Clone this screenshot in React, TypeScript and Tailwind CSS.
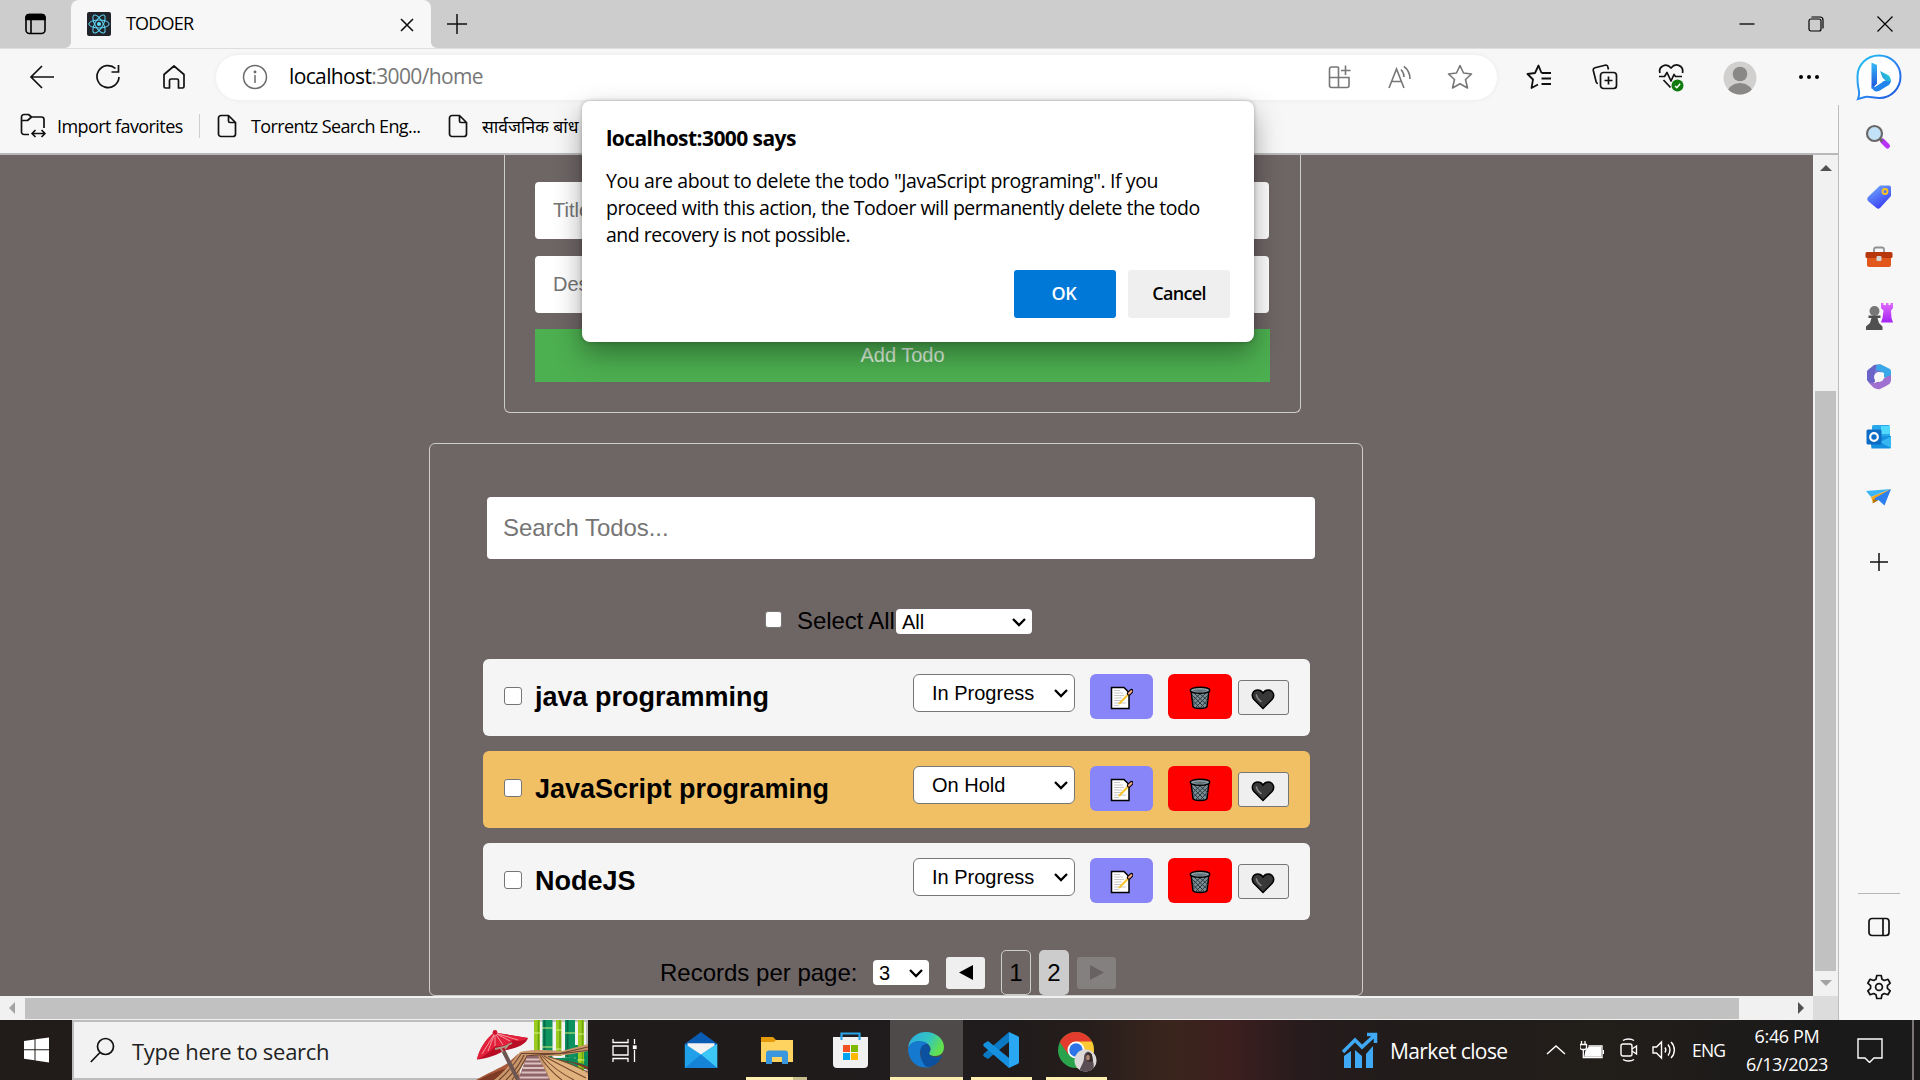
import React from "react";

type P = { className?: string };

function Chevron({ className = "" }: P) {
  return (
    <svg className={className} width="14" height="10" viewBox="0 0 14 10" fill="none" stroke="#000" strokeWidth="2.3">
      <path d="M1 2 L7 8 L13 2" />
    </svg>
  );
}

function ReactLogo() {
  return (
    <svg width="24" height="24" viewBox="0 0 24 24" fill="none" stroke="#61dafb" strokeWidth="1">
      <rect width="24" height="24" rx="2" fill="#20232a" stroke="none" />
      <ellipse cx="12" cy="12" rx="10.2" ry="4" />
      <ellipse cx="12" cy="12" rx="10.2" ry="4" transform="rotate(60 12 12)" />
      <ellipse cx="12" cy="12" rx="10.2" ry="4" transform="rotate(120 12 12)" />
      <circle cx="12" cy="12" r="2.1" fill="#61dafb" stroke="none" />
    </svg>
  );
}

function TabStrip() {
  return (
    <div className="flex h-12 shrink-0 items-center bg-[#cdcdcd]">
      <svg className="ml-[25px]" width="22" height="22" viewBox="1 0 22 22" fill="none" stroke="#000" strokeWidth="1.6">
        <rect x="2" y="1.5" width="19" height="19" rx="3.5" />
        <path d="M2 6.5V4.5a3 3 0 0 1 3-3h13a3 3 0 0 1 3 3v2z" fill="#000" />
        <path d="M7 7V20.5" />
      </svg>
      <div className="relative ml-6 flex h-12 w-[360px] items-center rounded-t-lg bg-[#f7f7f7] pl-4">
        <svg className="absolute -left-1.5 bottom-0" width="6" height="6" viewBox="0 0 6 6"><path d="M6 0V6H0A6 6 0 0 0 6 0Z" fill="#f7f7f7" /></svg>
        <svg className="absolute -right-1.5 bottom-0" width="6" height="6" viewBox="0 0 6 6"><path d="M0 0V6H6A6 6 0 0 1 0 0Z" fill="#f7f7f7" /></svg>
        <ReactLogo />
        <span className="mb-0.5 ml-[15px] text-lg tracking-[-0.8px]">TODOER</span>
        <svg className="absolute left-[329px] top-[18px]" width="14" height="14" viewBox="0 0 14 14" stroke="#111" strokeWidth="1.6"><path d="M1 1L13 13M13 1L1 13" /></svg>
      </div>
      <svg className="ml-[15px]" width="22" height="22" viewBox="0 0 22 22" stroke="#111" strokeWidth="1.5"><path d="M11 1V21M1 11H21" /></svg>
      <div className="ml-auto flex items-center pr-[27px]">
        <svg width="16" height="16" viewBox="0 0 16 16" stroke="#000" strokeWidth="1.3"><path d="M.5 8H15.5" /></svg>
        <svg className="ml-[53px]" width="16" height="16" viewBox="0 0 16 16" fill="none" stroke="#000" strokeWidth="1.2">
          <rect x="1" y="3" width="12" height="12" rx="2" />
          <path d="M3.5 1H12a3 3 0 0 1 3 3V12.5" />
        </svg>
        <svg className="ml-[53px]" width="16" height="16" viewBox="0 0 16 16" stroke="#000" strokeWidth="1.2"><path d="M.5 .5L15.5 15.5M15.5 .5L.5 15.5" /></svg>
      </div>
    </div>
  );
}

function BingLogo() {
  return (
    <svg width="48" height="48" viewBox="0 0 48 48" fill="none">
      <defs>
        <linearGradient id="bg1" x1="0" y1="0" x2="1" y2="1"><stop stopColor="#1fc8ee" /><stop offset=".6" stopColor="#2d7df2" /><stop offset="1" stopColor="#1652d8" /></linearGradient>
        <linearGradient id="bg2" x1="0" y1="0" x2="0" y2="1"><stop stopColor="#37bdf5" /><stop offset="1" stopColor="#1f4ddd" /></linearGradient>
        <linearGradient id="bg3" x1="1" y1="0" x2="0" y2="1"><stop stopColor="#2ee0d0" /><stop offset="1" stopColor="#1f7bea" /></linearGradient>
      </defs>
      <path d="M24 2.500C36 2.500 45.500 11.500 45.500 23.500S36 45 24.500 45C18 45 14 43 10 44L3 46C4.500 42.500 4.500 39.500 3.500 35.500C2.500 31.500 2.500 28.500 2.500 23.500C2.500 11.500 12 2.500 24 2.500Z" fill="#fff" stroke="url(#bg1)" strokeWidth="2" />
      <path d="M16.500 9.500L22 12V30.500L17 36C16.500 35.500 16.500 35 16.500 34Z" fill="url(#bg2)" />
      <path d="M25 18L33 22C37 24.500 36.500 30.500 33 32.500L27.500 28.500L30.500 27.500L27.500 24.500Z" fill="url(#bg3)" />
      <path d="M16.500 33C17 37.500 21 39.500 24 38L33 32.500C35 31 36 29 35.500 27C34 29.500 31 27.500 28.500 28.500L20 34Z" fill="#2384ee" />
    </svg>
  );
}

function Toolbar() {
  return (
    <div className="flex h-[57px] shrink-0 items-center border-t border-[#dedede] bg-[#f7f7f7]">
      <svg className="ml-[29px]" width="25" height="26" viewBox="0 0 25 26" fill="none" stroke="#111" strokeWidth="1.7"><path d="M25 13H2M13 2L2 13L13 24" /></svg>
      <svg className="ml-[41px]" width="26" height="26" viewBox="0 0 26 26" fill="none" stroke="#111" strokeWidth="1.7"><path d="M20.500 4.500A11 11 0 1 0 24 13M23.500 1V8H16.500" /></svg>
      <svg className="ml-[41px]" width="24" height="26" viewBox="0 0 24 26" fill="none" stroke="#111" strokeWidth="1.7" strokeLinejoin="round"><path d="M2 10.500L12 2L22 10.500V22.500C22 23.500 21.500 24 20.500 24H16.500V16.500C16.500 15.500 16 15 15 15H9C8 15 7.500 15.500 7.500 16.500V24H3.500C2.500 24 2 23.500 2 22.500Z" /></svg>
      <div className="ml-[30px] flex h-[45px] w-[1281px] items-center rounded-full bg-white shadow-[0_0_5px_rgba(0,0,0,0.06)]">
        <svg className="ml-[26px]" width="26" height="26" viewBox="0 0 26 26" fill="none" stroke="#6b6b6b" strokeWidth="1.500"><circle cx="13" cy="13" r="11.500" /><path d="M13 11V19" /><circle cx="13" cy="8" r=".7" fill="#6b6b6b" /></svg>
        <span className="ml-[21px] text-[21px] tracking-[-0.63px] text-[#767676]"><span className="text-black">localhost</span>:3000/home</span>
        <svg className="ml-auto" width="23" height="24" viewBox="0 0 23 24" fill="none" stroke="#767676" strokeWidth="1.600"><path d="M10.500 2H3.500A2 2 0 0 0 1.500 4V20.500A2 2 0 0 0 3.500 22.500H19A2 2 0 0 0 21 20.500V12.500H1.500M10.500 2V22.500M17.500 .5V10M13 5.500H22.500" /></svg>
        <svg className="ml-[37px]" width="24" height="24" viewBox="0 0 24 24" fill="none" stroke="#767676" strokeWidth="1.600"><path d="M1 23L8.500 4L16 23M3.500 16.500H13.500M13 4.500C15 6.500 16 9 16 12M16 1.500C20 4.500 22 9 22 14" /></svg>
        <svg className="ml-[35px] mr-6" width="26" height="26" viewBox="0 0 26 26" fill="none" stroke="#767676" strokeWidth="1.600" strokeLinejoin="round"><path d="M13 1.500L16.500 9L24.500 10L18.500 15.500L20.500 24L13 19.800L5.500 24L7.500 15.500L1.500 10L9.500 9Z" /></svg>
      </div>
      <svg className="ml-[29px]" width="26" height="26" viewBox="0 0 26 26" fill="none" stroke="#111" strokeWidth="1.800" strokeLinejoin="round"><path d="M15.500 9L12.500 1.500L9 9L1.500 10L7 15.500L5.500 24L12 20.500M15.500 9H25M15.500 14.500H25M15.500 20H25" /></svg>
      <svg className="ml-10" width="26" height="26" viewBox="0 0 26 26" fill="none" stroke="#111" strokeWidth="1.700" strokeLinejoin="round"><path d="M6 19.500C5 19.500 4.500 19 4.200 18L1.300 6.500C1 5 1.500 4.200 3 3.800L13 1.200C14.500 .8 15.500 1.500 15.800 2.800L16.500 5.500" /><rect x="8.500" y="8.500" width="16" height="16" rx="3" /><path d="M16.500 12.500V20.500M12.500 16.500H20.500" /></svg>
      <svg className="ml-10 mt-0.5" width="27" height="30" viewBox="0 0 27 30" fill="none" stroke="#111" strokeWidth="1.700" strokeLinejoin="round"><path d="M2 10C0 4 8 -1 13 5C18 -1 26 3 24.500 10M1 13.500H6.500L9 9.500L13 18L16 11.500L17.500 13.500H24M5.500 17L12.500 24.500" /><circle cx="19.500" cy="22.500" r="6" fill="#107c10" stroke="none" /><path d="M17 23L18.800 24.700L22.200 20.800" stroke="#fff" strokeWidth="1.400" /></svg>
      <svg className="ml-[38px] mt-px" width="34" height="34" viewBox="0 0 34 34"><defs><clipPath id="av"><circle cx="17" cy="17" r="16.500" /></clipPath></defs><g clipPath="url(#av)"><rect width="34" height="34" fill="#d2d0ce" /><circle cx="17" cy="13" r="7.300" fill="#8a8886" /><ellipse cx="17" cy="32" rx="12.500" ry="10" fill="#8a8886" /></g></svg>
      <svg className="ml-[41px]" width="22" height="6" viewBox="0 0 22 6"><circle cx="3" cy="3" r="2" /><circle cx="11" cy="3" r="2" /><circle cx="19" cy="3" r="2" /></svg>
      <div className="ml-[35px]"><BingLogo /></div>
    </div>
  );
}

function DocIcon({ className = "" }: P) {
  return <svg className={className} width="20" height="24" viewBox="0 0 20 24" fill="none" stroke="#111" strokeWidth="1.700" strokeLinejoin="round"><path d="M4 1.500H11.500L18.500 8.500V20A2.500 2.500 0 0 1 16 22.500H4A2.500 2.500 0 0 1 1.500 20V4A2.500 2.500 0 0 1 4 1.500ZM11.500 1.500V7A1.500 1.500 0 0 0 13 8.500H18.500" /></svg>;
}

function Bookmarks() {
  return (
    <div className="flex h-[50px] shrink-0 items-center border-b-2 border-[#b9b9b9] bg-[#f7f7f7] pb-[7px] text-lg">
      <svg className="ml-5" width="26" height="25" viewBox="0 0 26 25" fill="none" stroke="#111" strokeWidth="1.700" strokeLinejoin="round"><path d="M9 21.500H4A2.500 2.500 0 0 1 1.500 19V4A2.500 2.500 0 0 1 4 1.500H8.500L11.500 4H21.500A2.500 2.500 0 0 1 24 6.500V15M1.500 7.500H7.500L11.500 4M12.500 20.500H25M15.500 17L12 20.500L15.500 24M21.500 17L25 20.500L21.500 24" /></svg>
      <span className="ml-[11px] w-[142px] whitespace-nowrap tracking-[-0.57px]">Import favorites</span>
      <div className="h-6 w-px bg-[#cfcfcf]" />
      <DocIcon className="ml-[17px]" />
      <span className="ml-[14px] w-[197px] whitespace-nowrap tracking-[-0.61px]">Torrentz Search Eng...</span>
      <DocIcon />
      <span className="ml-[14px] w-[150px] overflow-hidden whitespace-nowrap text-[17.5px] leading-8">सार्वजनिक बांध</span>
    </div>
  );
}

function Memo() {
  return <svg width="24" height="24" viewBox="0 0 24 24"><path d="M2.500 1.500H15L20 6.500V22.500H2.500Z" fill="#fff" stroke="#000" strokeWidth="1.500" /><path d="M5 4.500H11M5 7H14M5 9.500H15M5 12H13M5 14.500H12M5 17H17M5 19.500H10" stroke="#c8c8c8" strokeWidth="1" /><path d="M10 18L20 7.500" stroke="#f7c52b" strokeWidth="2" /><path d="M20 7.500L22.500 5" stroke="#000" strokeWidth="4.200" strokeLinecap="round" /><path d="M20 7.500L22.300 5.200" stroke="#f0a58a" strokeWidth="2.200" strokeLinecap="round" /></svg>;
}

function Bin() {
  return (
    <svg width="24" height="24" viewBox="0 0 24 24">
      <path d="M3 4L5 20.500C5.500 23 18.500 23 19 20.500L21 4Z" fill="#7b8d94" stroke="#000" strokeWidth="1.500" />
      <path d="M4 9L17 22M6 7L19 19M11 7L20 15M4.500 14L12 22M20 9L7 22M18 7L5.500 19M13 7L4.500 15M19.500 14L12 22" stroke="#2c3a40" strokeWidth="1" />
      <ellipse cx="12" cy="4.300" rx="9.800" ry="3" fill="#92a3aa" stroke="#000" strokeWidth="1.400" />
      <ellipse cx="12" cy="4.700" rx="6.800" ry="1.200" fill="#5f7078" />
    </svg>
  );
}

function Heart() {
  return <svg width="24" height="22" viewBox="0 0 24 22"><path d="M12 20.500L3 11.500C-.5 7.500 2 2 6.700 2C9.200 2 11 3.300 12 5C13 3.300 14.800 2 17.300 2C22 2 24.500 7.500 21 11.500Z" fill="#383838" stroke="#000" strokeWidth="1.500" /><path d="M5.500 7C5.500 9 7 11 10 13.500" stroke="#8a8a8a" strokeWidth="1.600" fill="none" strokeLinecap="round" /></svg>;
}

function TodoRow({ title, status, active }: { title: string; status: string; active?: boolean }) {
  return (
    <div className={"flex h-[77px] w-[827px] items-start rounded-md " + (active ? "bg-[#f1c065]" : "bg-[#f5f5f5]")}>
      <input type="checkbox" className="ml-[21px] mt-7 size-[18px] shrink-0 appearance-none rounded-[3px] border border-[#767676] bg-white" />
      <h3 className="ml-[13px] mt-[18px] w-[378px] whitespace-nowrap text-[27px] font-bold leading-10">{title}</h3>
      <div className="mt-[15px] flex h-[38px] w-[162px] items-center rounded-md border border-[#767676] bg-white pl-[18px] pr-[6px] text-xl">
        {status}
        <Chevron className="ml-auto" />
      </div>
      <button className="ml-[15px] mt-[15px] flex h-[45px] w-[63px] items-center justify-center rounded-md bg-[#8885f8] pt-[3px] pr-px"><Memo /></button>
      <button className="ml-[15px] mt-[15px] flex h-[45px] w-16 items-center justify-center rounded-md bg-[#ff0000] pt-[3px]"><Bin /></button>
      <button className="ml-[6px] mt-[21px] flex h-[35px] w-[51px] items-center justify-center rounded-[3px] border border-[#767676] bg-[#efefef] pt-[3px] pr-px"><Heart /></button>
    </div>
  );
}

function Page() {
  return (
    <div className="h-[841px] w-[1813px] overflow-hidden bg-[#6e6565] font-['Liberation_Sans',sans-serif]">
      <div className="ml-[504px] h-[258px] w-[797px] rounded-b-md border border-t-0 border-[#ccc] pl-[30px] pt-[27px] text-xl">
        <div className="flex h-[57px] w-[734px] items-center rounded-sm bg-white pb-0.5 pl-[18px] text-[#757575]">Title</div>
        <div className="mt-[17px] flex h-[57px] w-[734px] items-center rounded-sm bg-white pb-0.5 pl-[18px] text-[#757575]">Description</div>
        <button className="mt-4 block h-[53px] w-[735px] bg-[#4caf50] pb-0.5 text-white/80">Add Todo</button>
      </div>
      <div className="ml-[429px] mt-[30px] h-[553px] w-[934px] rounded-md border border-[#ccc]">
        <div className="ml-[57px] mt-[53px] flex h-[62px] w-[828px] items-center rounded-sm bg-white pl-4 text-2xl tracking-[-0.05px] text-[#757575]">Search Todos...</div>
        <div className="ml-[335px] mt-[50px] flex h-[25px] items-center text-2xl">
          <input type="checkbox" className="mb-[5px] size-[17px] appearance-none rounded-[3px] border border-[#767676] bg-white" />
          <span className="mb-px ml-[15px] w-[99px] whitespace-nowrap tracking-[-0.1px]">Select All</span>
          <div className="flex h-[25px] w-[136px] items-center rounded-sm bg-white pl-1.5 pr-[6px] text-xl">All<Chevron className="ml-auto" /></div>
        </div>
        <div className="ml-[53px] mt-[25px] flex flex-col gap-[15px]">
          <TodoRow title="java programming" status="In Progress" />
          <TodoRow title="JavaScript programing" status="On Hold" active />
          <TodoRow title="NodeJS" status="In Progress" />
        </div>
        <div className="ml-[230px] mt-[30px] flex h-[45px] items-center text-2xl">
          <span className="w-[213px] whitespace-nowrap">Records per page:</span>
          <div className="flex h-[25px] w-[56px] items-center rounded-sm bg-white pl-1.5 pr-[6px] text-xl">3<Chevron className="ml-auto" /></div>
          <div className="ml-[17px] flex h-[32px] w-[39px] items-center justify-center rounded-[3px] bg-[#efefef]"><svg width="14" height="15" viewBox="0 0 14 15"><path d="M14 0V15L0 7.500Z" /></svg></div>
          <div className="ml-4 flex h-[45px] w-[30px] items-center justify-center rounded-[5px] border border-[#ccc]">1</div>
          <div className="ml-2 flex h-[45px] w-[30px] items-center justify-center rounded-[5px] bg-[#ccc]">2</div>
          <div className="ml-2 flex h-[32px] w-[39px] items-center justify-center rounded-[3px] bg-[#858080]"><svg width="14" height="15" viewBox="0 0 14 15"><path d="M0 0V15L14 7.500Z" fill="#686262" /></svg></div>
        </div>
      </div>
    </div>
  );
}

function VScroll() {
  return (
    <div className="flex h-[841px] w-[25px] flex-col items-center bg-[#f1f1f1]">
      <svg className="mt-[10px]" width="12" height="6" viewBox="0 0 12 6"><path d="M0 6L6 0L12 6Z" fill="#505050" /></svg>
      <div className="mr-px mt-[220px] h-[580px] w-[21px] bg-[#c1c1c1]" />
      <svg className="mt-[9px]" width="12" height="6" viewBox="0 0 12 6"><path d="M0 0L6 6L12 0Z" fill="#a3a3a3" /></svg>
    </div>
  );
}

function HScroll() {
  return (
    <div className="flex h-6 w-full items-center bg-[#f1f1f1]">
      <svg className="ml-[9px]" width="6" height="12" viewBox="0 0 6 12"><path d="M6 0L0 6L6 12Z" fill="#a3a3a3" /></svg>
      <div className="ml-[10px] h-[21px] w-[1714px] bg-[#c1c1c1]" />
      <svg className="ml-[59px]" width="6" height="12" viewBox="0 0 6 12"><path d="M0 0L6 6L0 12Z" fill="#505050" /></svg>
      <div className="ml-auto h-6 w-[25px] bg-[#dcdcdc]" />
    </div>
  );
}

function SidebarIcons() {
  return (
    <div className="flex flex-col items-center gap-8 pl-px pt-[18px]">
      <svg width="28" height="28" viewBox="0 0 28 28"><path d="M17.500 18L22.500 23" stroke="#b832f5" strokeWidth="5" strokeLinecap="round" /><path d="M14 15L17.500 18.500" stroke="#666" strokeWidth="3" /><circle cx="9.500" cy="10.500" r="7.500" fill="#c3e2f7" stroke="#6a6866" strokeWidth="2.200" /></svg>
      <svg width="28" height="28" viewBox="0 0 28 28"><defs><linearGradient id="tg" x1="0" y1="0" x2=".6" y2="1"><stop stopColor="#74b4fa" /><stop offset="1" stopColor="#3a3ef5" /></linearGradient></defs><path d="M15 2.500H24A2 2 0 0 1 26 4.500V13L15 25A3 3 0 0 1 11.500 25L3 18A3 3 0 0 1 3 14Z" fill="url(#tg)" /><circle cx="20" cy="8.500" r="2.500" fill="none" stroke="#fcc419" strokeWidth="1.800" /></svg>
      <svg width="28" height="28" viewBox="0 0 28 28"><path d="M9 9V6A2 2 0 0 1 11 4.500H17A2 2 0 0 1 19 6V9" fill="none" stroke="#8f9092" strokeWidth="1.800" /><rect x="2" y="13" width="24" height="11" rx="2" fill="#e2581c" /><rect x="0.500" y="9" width="27" height="6" rx="1.500" fill="#b7360c" /><rect x="11.500" y="13" width="5" height="5" rx="1" fill="#d3d3d3" /></svg>
      <svg width="28" height="28" viewBox="0 0 28 28"><defs><linearGradient id="rk" x1="0" y1="0" x2="0" y2="1"><stop stopColor="#e06bff" /><stop offset="1" stopColor="#a423f2" /></linearGradient></defs><path d="M16 0H18.500V2H21V0H23.500V2H25.500V0H28V5L26 7.500L26.500 15L28 19.500H16L17.500 15L18.500 7.500L16 5Z" fill="url(#rk)" /><circle cx="9.500" cy="8" r="5" fill="#777" /><path d="M3.500 12.500H15.500V15H12.500L14 20L17.500 23.500V27H1V23.500L5 20L6.500 15H3.500Z" fill="#505050" /></svg>
      <svg width="28" height="28" viewBox="0 0 28 28"><path d="M8 4L13 1.500C15 .8 17 2 17 4V9L9 13V21L4 19C2.500 18 2 17 2 15V10C2 7 5 5 8 4Z" fill="#7577d6" /><path d="M11 2L16 1.500L25 6C26 7 26 8 26 10V18L19 14V10L10 6C9 5 9 3 11 2Z" fill="#39a7e8" /><path d="M26 15C26 20 25 21 21 23L15 26C13 26.500 11 26 9 25L3 19L10 20L19 15L26 12Z" fill="#a070d0" /><path d="M9 2L12 1.500L10 8V19L5 20L2 17V8Z" fill="#6b64c8" /><circle cx="14" cy="14" r="5" fill="#f7f7f7" /></svg>
      <svg width="28" height="28" viewBox="0 0 28 28"><rect x="7" y="2" width="18" height="18" rx="1.500" fill="#28a8ea" /><path d="M16 3H25V11H16Z" fill="#50d9ff" /><path d="M5 14L26 13V24A1.500 1.500 0 0 1 24.500 25.500H6.500Z" fill="#1490df" /><path d="M5 14L26 25V13.500L17 18Z" fill="#35b8f1" /><rect x="1.500" y="6.500" width="15" height="15" rx="1.500" fill="#0f6cc4" /><circle cx="9" cy="14" r="3.800" fill="none" stroke="#fff" strokeWidth="2.200" /></svg>
      <svg width="28" height="28" viewBox="0 0 28 28"><path d="M1 8L26 6L6 14Z" fill="#3bb5f5" /><path d="M6 14L26 6L8 20Z" fill="#f3a51c" /><path d="M8 20L10 15L26 6L19.500 22.500L13.500 17Z" fill="#2c7fee" /><path d="M7.500 20.500L8.500 16L13 17.500Z" fill="#b87408" /></svg>
      <svg className="mr-px mt-[10px]" width="18" height="18" viewBox="0 0 18 18" stroke="#111" strokeWidth="1.500"><path d="M9 0V18M0 9H18" /></svg>
    </div>
  );
}

function Sidebar() {
  return (
    <div className="flex h-full w-[82px] flex-col border-l border-[#bdbdbd] bg-[#f7f7f7] pr-[2px]">
      <SidebarIcons />
      <div className="mt-auto flex flex-col items-center">
        <div className="h-px w-[42px] bg-[#b5b5b5]" />
        <svg className="mt-[23px]" width="22" height="20" viewBox="0 0 22 20" fill="none" stroke="#111" strokeWidth="1.700"><rect x="1" y="1.500" width="20" height="17" rx="3" /><path d="M15 1.500V18.500" /></svg>
        <svg className="mb-[20px] mt-[37px]" width="26" height="26" viewBox="0 0 26 26" fill="none" stroke="#111" strokeWidth="1.700" strokeLinejoin="round"><path d="M10.800 1.500H15.200L16 5.200L18.300 6.500L21.900 5.300L24.200 9.200L21.400 11.700V14.300L24.200 16.800L21.900 20.700L18.300 19.500L16 20.800L15.200 24.500H10.800L10 20.800L7.700 19.500L4.100 20.700L1.800 16.800L4.600 14.300V11.700L1.800 9.200L4.100 5.300L7.700 6.500L10 5.200Z" /><circle cx="13" cy="13" r="3.400" /></svg>
      </div>
    </div>
  );
}

function ParkArt() {
  return (
    <svg width="112" height="60" viewBox="0 0 112 60">
      <rect x="92" y="25" width="20" height="24" fill="#0b8a5e" />
      <rect x="77" y="38" width="24" height="12" fill="#0b8a5e" />
      <g>
        <rect x="58" y="0" width="6" height="38" fill="#9ccb1f" />
        <rect x="66.500" y="0" width="10" height="38" fill="#0f9460" />
        <rect x="80" y="0" width="5.500" height="36" fill="#9ccb1f" />
        <rect x="89" y="0" width="10" height="50" fill="#0c9260" />
        <rect x="102" y="0" width="6" height="54" fill="#9ccb1f" />
        <path d="M68.500 0V38M91.500 0V50" stroke="#086b4a" strokeWidth="2" />
        <path d="M62.500 0V38M84 0V36M106.500 0V54" stroke="#6da30f" strokeWidth="1.500" />
        <path d="M57.500 13H64.500M66 8H77M66 27H77M57.500 31H64.500M79.500 10H86M79.500 29H86M88.500 13H99.500M88.500 38H99.500M101.500 14H108.500M101.500 40H108.500" stroke="#d6ef7f" strokeWidth="1" />
      </g>
      <path d="M0 60C10 54 24 48 32 43L42 34L44 60Z" fill="#a85a3a" />
      <path d="M2 60C14 54 22 51 32 48L28 60Z" fill="#7d3a24" />
      <path d="M18 60C28 52 36 42 44 32C56 29 70 30 86 31L112 24V31C98 34 84 36 72 36L84 46L112 52V60H72L62 36H54L46 46L40 60Z" fill="#c9976a" />
      <path d="M66 36C84 38 100 46 112 54V60H74Z" fill="#e0b27e" />
      <path d="M23 60C34 50 40 42 45 34M30 60C38 52 44 44 48 35M36 60C42 52 47 44 51 36M45 33.500H84L112 27M50 36C70 34 94 34 112 30" fill="none" stroke="#6b4330" strokeWidth="1.100" />
      <path d="M64 36C70 46 78 54 86 60M66 36C76 47 86 54 98 60M68 36C82 44 96 51 110 58M72 36.500C88 41 102 47 112 52" fill="none" stroke="#7a4c30" strokeWidth="1.100" />
      <path d="M51 36H62L74 60H42Z" fill="#8f6468" />
      <path d="M50 39.500H63.500M48.500 43.500H65.500M47 48H68M45.500 52.500H70M43.500 57.500H72.500" stroke="#dcc0bd" strokeWidth="1.900" />
      <path d="M78 38.500C92 39 104 44 112 49V45L100 42L98 37Z" fill="#0b8a5e" />
      <path d="M84 40.500C96 42 106 46 112 50V46.500C102 43 94 40.500 84 40.500Z" fill="#7d3a24" />
      <path d="M27 30L42 60" stroke="#6d5552" strokeWidth="4" />
      <path d="M18 12.500L52 18C50 24 42 28 30 30C22 34 12 39 1 39.500C3 30 9 20 18 12.500Z" fill="#b80d25" />
      <path d="M18 12.500L52 18C48 21 42 22 37 20C32 25 26 27 20 26C14 32 7 37 1 39.500C3 30 9 20 18 12.500Z" fill="#e3203b" />
      <path d="M19 29L28 27L36 23M27 32L24 27M29 29L33 24" stroke="#a99a86" strokeWidth="1.800" fill="none" />
      <path d="M19 13L6 34M19 13L12 31M19 13L19 26M19 13L27 25M19 13L34 21M19 13L42 20" stroke="#f7b6b8" strokeWidth=".8" />
      <circle cx="19" cy="12.500" r="2.400" fill="#d0122d" />
    </svg>
  );
}

function Taskbar() {
  return (
    <div className="flex h-[60px] w-full items-center overflow-hidden bg-[linear-gradient(90deg,#211c1a_0px,#201b1c_1000px,#241d1b_1080px,#3a251d_1170px,#3c1f1e_1230px,#281b1d_1300px,#211c1b_1380px,#221e1a_1600px,#1b1a1a_1800px)] text-white">
      <div className="flex w-[72px] justify-center"><svg width="25" height="26" viewBox="0 0 25 26" fill="#fff"><path d="M0 4L10.500 2.500V12.300H0ZM11.500 2.300L25 .5V12.300H11.500ZM0 13.300H10.500V23.300L0 21.800ZM11.500 13.300H25V25.500L11.500 23.500Z" /></svg></div>
      <div className="flex h-[60px] w-[516px] items-center border-2 border-[#bdbdbd] bg-[#f2f2f2] text-[#222]">
        <svg className="ml-4" width="25" height="26" viewBox="0 0 25 26" fill="none" stroke="#111" strokeWidth="1.700"><circle cx="15.500" cy="9.500" r="8" /><path d="M10 15.500L.8 25" /></svg>
        <span className="ml-[17px] mt-0.5 text-[22px] tracking-[-0.27px]">Type here to search</span>
        <div className="-mr-0.5 ml-auto"><ParkArt /></div>
      </div>
      <svg className="ml-6" width="25" height="25" viewBox="0 0 25 25" fill="none" stroke="#fff" strokeWidth="1.300"><path d="M1 1V4.500H16V1M1 24V20.500H16V24M1 8H16V17H1ZM22.500 1V6M22.500 12V24" /><rect x="21.500" y="8" width="2.500" height="2.500" fill="#fff" /></svg>
      <svg className="ml-[46px]" width="36" height="36" viewBox="0 0 36 40"><path d="M0 13L18 0L36 13L30 20H6Z" fill="#0a5cb3" /><path d="M3 12.500H33V22L18 28L3 22Z" fill="#f2f2f2" /><path d="M0 13L18 25L36 13V40H0Z" fill="#1fa0e8" /><path d="M18 25L36 13V40Z" fill="#3cc7f7" /><path d="M0 40L18 25L36 40Z" fill="#1583d6" /></svg>
      <div className="ml-[27px] flex h-[60px] w-[61px] flex-col items-center">
        <svg className="mt-[17px]" width="32" height="27" viewBox="0 0 32 27"><path d="M0 0H12L15 3V8H0Z" fill="#e39a0b" /><path d="M0 5H13L15 3H32V25H0Z" fill="#ffd35f" /><path d="M5 27V16.500A3 3 0 0 1 8 13.500H24A3 3 0 0 1 27 16.500V27H21V20H11V27Z" fill="#3a96dd" /></svg>
        <div className="mt-auto flex h-[3px] w-full"><div className="w-[47px] bg-[#fdefb0]" /><div className="w-[14px] bg-[#c9bf8e]" /></div>
      </div>
      <svg className="ml-[26px]" width="35" height="36" viewBox="0 0 35 36"><path d="M8.500 8V1.500H26.500V8" fill="none" stroke="#29a5ea" strokeWidth="2.200" /><path d="M0 5H35V32A4 4 0 0 1 31 36H4A4 4 0 0 1 0 32Z" fill="#f1f1f1" /><path d="M8.500 5V8M26.500 5V8" stroke="#29a5ea" strokeWidth="2.200" /><rect x="10" y="13" width="7" height="7" fill="#f25022" /><rect x="18" y="13" width="7" height="7" fill="#7fba00" /><rect x="10" y="21" width="7" height="7" fill="#00a4ef" /><rect x="18" y="21" width="7" height="7" fill="#ffb900" /></svg>
      <div className="ml-[22px] flex h-[60px] w-[73px] flex-col items-center bg-[#4e4a4a]">
        <svg className="mr-px mt-3" width="36" height="36" viewBox="0 0 36 36"><defs><linearGradient id="e1" x1="0" y1="0" x2="1" y2=".4"><stop stopColor="#2aa9e8" /><stop offset=".6" stopColor="#33c6c0" /><stop offset="1" stopColor="#63e04e" /></linearGradient></defs><path d="M0 16C1 6 9 0 18 0C28 0 36 7 36 15C36 21 32 24 27 24C24 24 21 23 21 21.500C21 20.500 22.500 20 22.500 17C22.500 13 18 9.500 11 9.500C6 9.500 2 12 0 16Z" fill="url(#e1)" /><path d="M0 17C2 11 6 9 11 9C15 9 18 10 20 12C15 12 12 17 12 21C12 28 17 33 23 35C10 38 0 29 0 17Z" fill="#1479cf" /><path d="M12.500 21C12 15 15 12 19 12C22 14 23 17 22 19C20 22 22 24.500 27 25C30 25 32 24.500 33.500 23.500C34 24 33 27 30 30C27 33.500 22 36 18 34.500C14.500 32 12.800 26 12.500 21Z" fill="#0c50a0" /></svg>
        <div className="mt-auto h-[3px] w-full bg-[#fdefb0]" />
      </div>
      <div className="ml-2 flex h-[60px] w-[61px] flex-col items-center">
        <svg className="mr-px mt-3" width="36" height="36" viewBox="0 0 36 36"><path d="M26 0L34.500 4C35.500 4.500 36 5 36 6V30C36 31 35.500 31.500 34.500 32L26 36Z" fill="#2aa7f2" /><path d="M26 0V10L5 27L1 24.500C0 23.500 0 22.500 1 21.500Z" fill="#0b78c4" /><path d="M26 36V26L5 9L1 11.500C0 12.500 0 13.500 1 14.500Z" fill="#1490df" /></svg>
        <div className="mt-auto h-[3px] w-full bg-[#fdefb0]" />
      </div>
      <div className="ml-[14px] flex h-[60px] w-[61px] flex-col items-center">
        <svg className="ml-px mt-3" width="39" height="40" viewBox="0 0 39 40"><defs><clipPath id="ch"><circle cx="18" cy="18" r="18" /></clipPath><clipPath id="pf"><circle cx="27.500" cy="28.500" r="11" /></clipPath></defs><g clipPath="url(#ch)"><rect width="36" height="36" fill="#2ba24c" /><path d="M-2 5L10 22L18 10H40V-4H-2Z" fill="#e33b2e" /><path d="M18 9.500H40V40H16L26 23Z" fill="#fcc934" /></g><circle cx="18" cy="18" r="8.500" fill="#fff" /><circle cx="18" cy="18" r="6.700" fill="#2c74e8" /><g clipPath="url(#pf)"><rect x="15" y="16" width="24" height="24" fill="#dcd9d8" /><path d="M21 40C22 35 26 31 26 26C26 21 29 19 31.500 20C35 22 34 27 35.500 31C36 34 36 38 34 40Z" fill="#5a4e54" /><path d="M28 23C29 20 33 20 34 23L35 29L33 30L29 29Z" fill="#352a2c" /><ellipse cx="30" cy="25.500" rx="1.800" ry="2.800" fill="#b58b78" /></g></svg>
        <div className="mt-auto h-[3px] w-full bg-[#fdefb0]" />
      </div>
      <svg className="ml-[235px]" width="36" height="36" viewBox="0 0 36 36" fill="#3fa9f5"><path d="M2 24L9 19V36H2ZM13 18L20 24V36H13ZM24 22L31 14V36H24Z" /><path d="M1 20L13 8L20 15L32 4M25 2.500H33.500V11" fill="none" stroke="#3fa9f5" strokeWidth="3.500" /></svg>
      <span className="ml-3 mt-[3px] w-[156px] whitespace-nowrap text-[21px] tracking-[-0.6px]">Market close</span>
      <svg width="20" height="10" viewBox="0 0 20 10" fill="none" stroke="#fff" strokeWidth="1.500"><path d="M1 9L10 1L19 9" /></svg>
      <svg className="ml-[14px]" width="24" height="18" viewBox="0 0 24 18" fill="none" stroke="#fff" strokeWidth="1.300"><path d="M1.500 0V3M5 0V3M0 3.500H6.500V6.500A2 2 0 0 1 4.500 8.500H2A2 2 0 0 1 0 6.500ZM3.300 8.500V16.500H22V5H8.500" /><path d="M6 10L9 6.500H20.500V15H5Z" fill="#fff" /><path d="M23.500 9V13" /></svg>
      <svg className="ml-[16px]" width="18" height="24" viewBox="0 0 18 24" fill="none" stroke="#fff" strokeWidth="1.400"><rect x="1" y="6" width="11" height="12" rx="2" /><path d="M12 11L16.500 8V16L12 13M3 2.500C6 .5 11 .5 14 2.500M3 21.500C6 23.500 11 23.500 14 21.500" /></svg>
      <svg className="ml-[14px]" width="24" height="20" viewBox="0 0 24 20" fill="none" stroke="#fff" strokeWidth="1.400"><path d="M1 7V13H4.500L9.500 18V2L4.500 7ZM13 7.500C14 9 14 11 13 12.500M16 4.500C18.500 8 18.500 12 16 15.500M19 2C23.500 6.500 23.500 13.500 19 18" /></svg>
      <span className="ml-[16px] mt-px w-[34px] text-[17.5px] tracking-[-0.8px]">ENG</span>
      <div className="ml-[18px] flex w-[86px] flex-col items-center text-lg leading-7 tracking-[-0.35px]"><span>6:46 PM</span><span>6/13/2023</span></div>
      <svg className="ml-[27px]" width="26" height="25" viewBox="0 0 26 25" fill="none" stroke="#fff" strokeWidth="1.400"><path d="M1 1H25V20H17L12.500 24.500L8 20H1Z" /></svg>
      <div className="ml-auto mr-[6px] h-[60px] w-0.5 bg-[#787574]" />
    </div>
  );
}

function Dialog() {
  return (
    <div className="absolute left-[582px] top-[101px] h-[241px] w-[672px] rounded-lg bg-white pl-6 pt-[22px] shadow-[0_12px_28px_rgba(0,0,0,0.35),0_0_4px_rgba(0,0,0,0.25)]">
      <h2 className="text-[21px] font-bold leading-[30px] tracking-[-0.57px]">localhost:3000 says</h2>
      <p className="mt-[14px] whitespace-nowrap text-[19.5px] leading-[27px]">
        <span className="block tracking-[-0.39px]">You are about to delete the todo "JavaScript programing". If you</span>
        <span className="block tracking-[-0.5px]">proceed with this action, the Todoer will permanently delete the todo</span>
        <span className="block tracking-[-0.49px]">and recovery is not possible.</span>
      </p>
      <div className="mt-[22px] flex justify-end gap-3 pr-6 text-lg font-semibold">
        <button className="h-12 w-[102px] rounded-[3px] bg-[#0078d7] pb-0.5 pr-0.5 tracking-[-0.4px] text-white">OK</button>
        <button className="h-12 w-[102px] rounded-[3px] bg-[#efefef] pb-0.5 tracking-[-0.65px]">Cancel</button>
      </div>
    </div>
  );
}

export default function App() {
  return (
    <div className="relative flex h-[1080px] w-[1920px] flex-col overflow-hidden bg-[#f7f7f7] font-['Open_Sans','Noto_Sans',sans-serif] text-black">
      <TabStrip />
      <Toolbar />
      <div className="flex h-[915px]">
        <div className="flex w-[1838px] flex-col">
          <Bookmarks />
          <div className="flex"><Page /><VScroll /></div>
          <HScroll />
        </div>
        <Sidebar />
      </div>
      <Taskbar />
      <Dialog />
    </div>
  );
}
